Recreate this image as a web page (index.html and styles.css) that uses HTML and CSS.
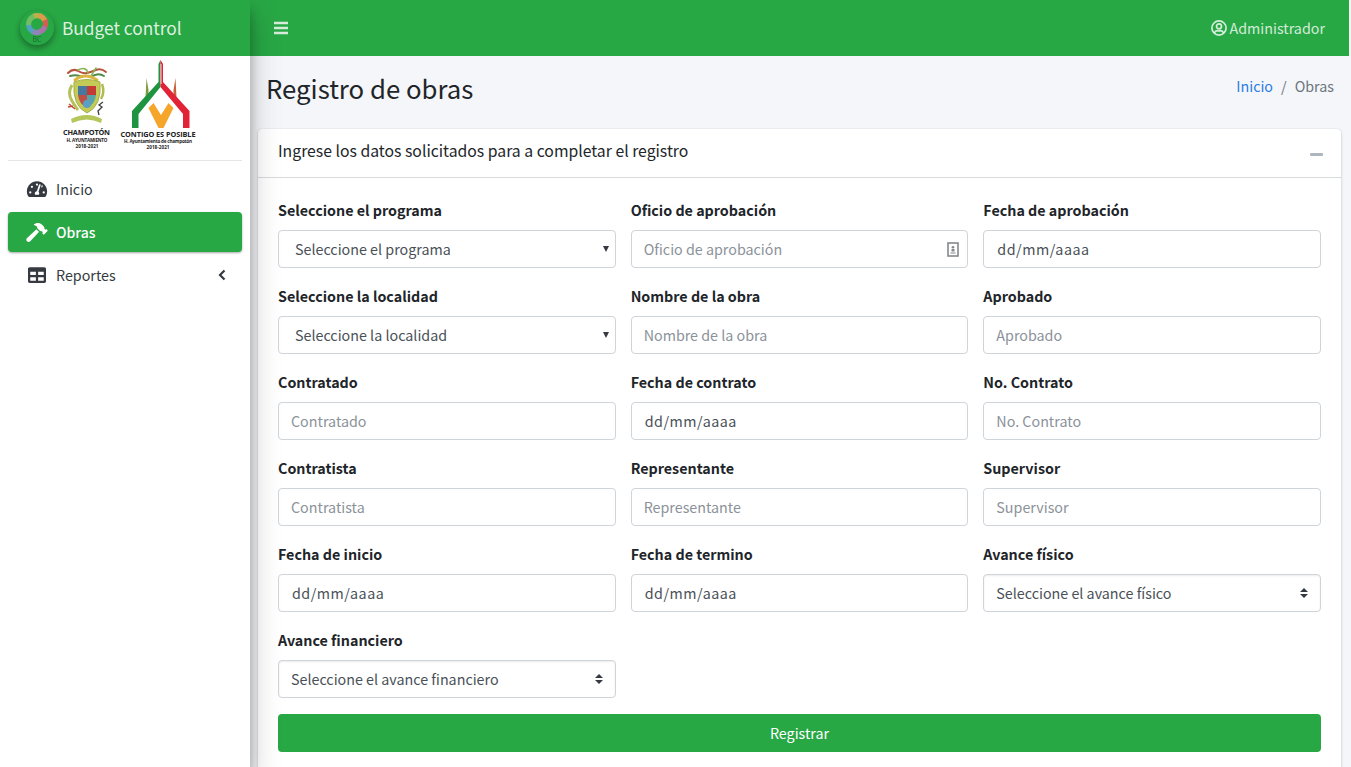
FILE: index.html
```html
<!DOCTYPE html>
<html lang="es">
<head>
<meta charset="utf-8">
<title>Budget control</title>
<link rel="stylesheet" href="styles.css">
</head>
<body>
<div class="app">
  <aside class="sidebar">
    <div class="brand">
      <svg class="brand-logo" width="34" height="34" viewBox="0 0 34 34">
        <circle cx="17" cy="17" r="17" fill="#28a745"/>
        <g fill="none" stroke-width="5.2">
          <path d="M13 5.600A9 9 0 0 1 20 5" stroke="#b9b04a"/>
          <path d="M19 4.600A9 9 0 0 1 25 10" stroke="#dc9a4c"/>
          <path d="M25 9A9 9 0 0 1 24.500 16.500" stroke="#d0604f"/>
          <path d="M25 15.500A9 9 0 0 1 19 21" stroke="#a874a8"/>
          <path d="M20 21A9 9 0 0 1 12 20" stroke="#8d85b8"/>
          <path d="M13 20.500A9 9 0 0 1 8.500 13" stroke="#4fa3bd"/>
          <path d="M8.500 14A9 9 0 0 1 14 5.400" stroke="#6fbf62"/>
        </g>
        <text class="logo-initials" x="17" y="30.500" text-anchor="middle">BC</text>
      </svg>
      <span class="brand-name">Budget control</span>
    </div>
    <div class="emblems">
      <svg width="250" height="104" viewBox="0 56 250 104">
        <g fill="none" stroke-linecap="round">
          <path d="M68 73q5-5 10-2t9 2 9-3 10 2" stroke="#b5533c" stroke-width="2"/>
          <path d="M70 76q7-2 12 1M91 77q7-5 13-1" stroke="#4f8a4a" stroke-width="2"/>
          <path d="M78 70q8-4 10 3M96 68l-5 8" stroke="#86b252" stroke-width="1.500"/>
          <path d="M75 80q10-8 22 0" stroke="#d9b740" stroke-width="3"/>
        </g>
        <path d="M74 82q13-5 26 0 2 24-13 31-15-7-13-31z" fill="#c3ca55" stroke="#a3b04a"/>
        <path d="M78 86h9v9h-9z" fill="#4678a0"/><path d="M87 86h9v9h-9z" fill="#c43a35"/>
        <path d="M78 95h9v13q-8-4-9-13z" fill="#bd5148"/><path d="M87 95h9q-1 9-9 13z" fill="#58a4a8"/>
        <circle cx="87" cy="104" r="4" fill="#5b9ec6"/>
        <path d="M72 85q-5 8 0 16t6 9" fill="none" stroke="#b4c25a" stroke-width="3"/>
        <path d="M69 104l6 5M68 107l5-1" stroke="#c5493c" stroke-width="1.500"/>
        <path d="M102 84q3 8-1 15" fill="none" stroke="#b0bb50" stroke-width="2.500"/>
        <path d="M103 102l-4 3 3 2-4 4 1 4" fill="none" stroke="#3c4043" stroke-width="1.300"/>
        <path d="M71 119q16-8 31 0l-1 4q-14-7-29 0z" fill="#b5c65a"/>
        <path d="M145.500 98l1-20 2 12v5z" fill="#7d9a3c"/><path d="M176.500 98l-1-20-2 12v5z" fill="#c8603a"/>
        <path d="M148.500 108l5-5 7.500 12 7.500-12 5 5-10 20h-5z" fill="#f6a52b"/>
        <path d="M160.500 60v27L138.500 114v14h-6.500v-17l26.500-29V64z" fill="#1f9440"/>
        <path d="M160.500 60l2.500 4v18l26.500 29v17H183v-14L160.500 87z" fill="#e02336"/>
        <path d="M161 64v20" stroke="#f3d9d2" stroke-width="1"/>
        <g class="emblem-text" text-anchor="middle">
          <text class="emblem-title" x="86.500" y="135" textLength="47">CHAMPOTÓN</text>
          <text x="87" y="142" textLength="41">H. AYUNTAMIENTO</text>
          <text x="87" y="148.300" textLength="23">2018-2021</text>
          <text class="emblem-title" x="158" y="136.500" textLength="75">CONTIGO ES POSIBLE</text>
          <text x="158" y="142.500" textLength="68">H. Ayuntamiento de champotón</text>
          <text x="158" y="148.800" textLength="23">2018-2021</text>
        </g>
      </svg>
    </div>
    <nav class="menu">
      <a class="item">
        <svg class="item-icon" width="21" height="18" viewBox="0 0 576 512"><path fill="currentColor" fill-rule="evenodd" d="M288 32C129 32 0 161 0 320c0 53 14 102 39 145 6 9 16 15 27 15h444c11 0 21-6 27-15 25-43 39-92 39-145 0-159-129-288-288-288zm0 64c16 0 29 11 32 26l-9 27c-5 7-13 11-23 11a32 32 0 0 1 0-64zM96 384a32 32 0 1 1 0-64 32 32 0 0 1 0 64zm48-160a32 32 0 1 1 0-64 32 32 0 0 1 0 64zm247-72l-61 184c13 12 22 28 22 48 0 12-3 23-9 32H233c-6-9-9-20-9-32 0-34 27-62 60-64l61-183c10-31 56-16 46 15zm15 57l22-64a32 32 0 1 1-22 64zm74 175a32 32 0 1 1 0-64 32 32 0 0 1 0 64z"/></svg>
        <span>Inicio</span>
      </a>
      <a class="item active">
        <svg class="item-icon" width="22" height="19" viewBox="0 0 576 512"><path fill="currentColor" d="M571.310 193.940l-22.630-22.630c-6.250-6.250-16.380-6.250-22.630 0l-11.310 11.310-28.900-28.900c5.630-21.310.36-44.900-16.350-61.610l-45.250-45.250c-62.480-62.480-163.790-62.480-226.280 0l90.510 45.250v18.750c0 16.970 6.740 33.250 18.750 45.250l49.140 49.140c16.710 16.710 40.300 21.980 61.610 16.350l28.900 28.900-11.310 11.310c-6.250 6.250-6.250 16.380 0 22.630l22.630 22.630c6.250 6.250 16.380 6.250 22.630 0l90.510-90.510c6.230-6.240 6.230-16.370-.02-22.620zm-286.720-15.200c-3.700-3.700-6.840-7.790-9.850-11.950L19.640 404.960c-25.570 23.880-26.260 64.190-1.530 88.930s65.050 24.050 88.920-1.530l238.130-255.070c-3.960-2.910-7.900-5.870-11.440-9.410l-49.130-49.140z"/></svg>
        <span>Obras</span>
      </a>
      <a class="item">
        <svg class="item-icon" width="20" height="18" viewBox="0 0 512 512"><path fill="currentColor" d="M464 32H48C22 32 0 54 0 80v352c0 27 22 48 48 48h416c27 0 48-21 48-48V80c0-26-21-48-48-48zM224 416H64v-96h160zm0-160H64v-96h160zm224 160H288v-96h160zm0-160H288v-96h160z"/></svg>
        <span>Reportes</span>
        <svg class="chevron" width="8" height="12" viewBox="0 0 8 12"><path d="M6.500 1.500L2 6l4.500 4.500" fill="none" stroke="currentColor" stroke-width="2.200"/></svg>
      </a>
    </nav>
  </aside>
  <div class="main">
    <header class="topbar">
      <svg width="14" height="16" viewBox="0 0 14 16"><path d="M0 3h14M0 8h14M0 13h14" stroke="currentColor" stroke-width="2.300"/></svg>
      <div class="user">
        <svg width="16" height="16" viewBox="0 0 16 16" fill="none" stroke="currentColor" stroke-width="1.700"><circle cx="8" cy="8" r="7.100"/><circle cx="8" cy="6.300" r="2.500"/><path d="M3.300 13q1-2.400 3-2.400 1.700.6 3.400 0 2 0 3 2.400"/></svg>
        <span>Administrador</span>
      </div>
    </header>
    <div class="page-head">
      <h1>Registro de obras</h1>
      <div class="crumbs"><a>Inicio</a><span class="slash">/</span><span>Obras</span></div>
    </div>
    <section class="card">
      <div class="card-head"><h3>Ingrese los datos solicitados para a completar el registro</h3><i class="minus"></i></div>
      <form class="card-body">
        <div class="grid">
          <div class="field"><label>Seleccione el programa</label><div class="control native">Seleccione el programa<i class="drop"></i></div></div>
          <div class="field"><label>Oficio de aprobación</label><div class="control hint">Oficio de aprobación
            <svg class="autofill" width="12" height="15" viewBox="0 0 12 15"><rect x="1" y="1" width="10" height="13" fill="#fff" stroke="#85888b" stroke-width="1.600"/><circle cx="6" cy="5.300" r="1.300" fill="#85888b"/><path d="M4.500 7h3v2.500h-3zM3.500 10.500h5v1h-5z" fill="#85888b"/></svg></div></div>
          <div class="field"><label>Fecha de aprobación</label><div class="control date">dd/mm/aaaa</div></div>
          <div class="field"><label>Seleccione la localidad</label><div class="control native">Seleccione la localidad<i class="drop"></i></div></div>
          <div class="field"><label>Nombre de la obra</label><div class="control hint">Nombre de la obra</div></div>
          <div class="field"><label>Aprobado</label><div class="control hint">Aprobado</div></div>
          <div class="field"><label>Contratado</label><div class="control hint">Contratado</div></div>
          <div class="field"><label>Fecha de contrato</label><div class="control date">dd/mm/aaaa</div></div>
          <div class="field"><label>No. Contrato</label><div class="control hint">No. Contrato</div></div>
          <div class="field"><label>Contratista</label><div class="control hint">Contratista</div></div>
          <div class="field"><label>Representante</label><div class="control hint">Representante</div></div>
          <div class="field"><label>Supervisor</label><div class="control hint">Supervisor</div></div>
          <div class="field"><label>Fecha de inicio</label><div class="control date">dd/mm/aaaa</div></div>
          <div class="field"><label>Fecha de termino</label><div class="control date">dd/mm/aaaa</div></div>
          <div class="field"><label>Avance físico</label><div class="control custom">Seleccione el avance físico<svg width="8" height="10" viewBox="0 0 8 10"><path d="M4 0l4 4H0zM4 10L0 6h8z" fill="#343a40"/></svg></div></div>
          <div class="field"><label>Avance financiero</label><div class="control custom">Seleccione el avance financiero<svg width="8" height="10" viewBox="0 0 8 10"><path d="M4 0l4 4H0zM4 10L0 6h8z" fill="#343a40"/></svg></div></div>
        </div>
        <button class="submit" type="button">Registrar</button>
      </form>
    </section>
  </div>
</div>
</body>
</html>
```
FILE: styles.css
```css
* { box-sizing: border-box; }
body {
  margin: 0;
  background: #f4f6f9;
  color: #212529;
  font-family: "Noto Sans CJK SC", "Noto Sans", sans-serif;
  font-size: 14.300px;
  line-height: 24px;
}
h1, h3 { margin: 0; font-weight: 400; }
.app { display: flex; height: 767px; overflow: hidden; }

.sidebar {
  position: relative;
  z-index: 2;
  width: 250px;
  flex: none;
  background: #fff;
  box-shadow: 0 14px 28px rgba(0,0,0,.25), 0 10px 10px rgba(0,0,0,.22);
}
.brand {
  display: flex;
  align-items: center;
  gap: 8px;
  height: 56px;
  padding-left: 20px;
  background: #28a745;
  color: rgba(255,255,255,.85);
  font-size: 17.300px;
}
.brand-logo {
  border-radius: 50%;
  box-shadow: 0 3px 6px rgba(0,0,0,.16), 0 3px 6px rgba(0,0,0,.23);
}
.logo-initials { font-size: 7px; fill: #1d6b31; }
.emblems { height: 105px; margin: 0 8px; border-bottom: 1px solid #e4e6e8; }
.emblems svg { display: block; margin-left: -8px; }
.emblem-text { font: 700 4.600px "Open Sans", sans-serif; fill: #222; }
.emblem-title { font-size: 7.300px; }

.menu { display: flex; flex-direction: column; gap: 3px; padding: 8px; }
.item {
  display: flex;
  align-items: center;
  height: 40px;
  padding: 0 16px 0 18px;
  border-radius: 4px;
  color: #343a40;
}
.item-icon { width: 22px; margin-right: 8px; }
.item.active {
  background: #28a745;
  color: #fff;
  font-size: 14px;
  font-weight: 500;
  box-shadow: 0 1px 3px rgba(0,0,0,.12), 0 1px 2px rgba(0,0,0,.24);
}
.chevron { margin-left: auto; }

.main { flex: 1; min-width: 0; }
.topbar {
  display: flex;
  align-items: center;
  justify-content: space-between;
  height: 56px;
  margin-right: 2px;
  padding: 0 24px;
  background: #28a745;
  color: rgba(255,255,255,.8);
}
.user { display: flex; align-items: center; gap: 3px; }
.page-head {
  display: flex;
  justify-content: space-between;
  height: 73px;
  padding: 14px 17px 0 16px;
}
.page-head h1 { font-size: 25.750px; line-height: 36px; }
.crumbs { display: flex; gap: 8px; padding-top: 4px; color: #6c757d; }
.crumbs a { color: #2a7de1; }

.card {
  height: 660px;
  margin: 0 10px 0 8px;
  border-radius: 4px;
  background: #fff;
  box-shadow: 0 0 1px rgba(0,0,0,.125), 0 1px 3px rgba(0,0,0,.2);
}
.card-head {
  display: flex;
  align-items: center;
  justify-content: space-between;
  height: 49px;
  padding: 0 18px 4px 20px;
  border-bottom: 1px solid #d9dadb;
}
.card-head h3 { font-size: 15.780px; }
.minus { width: 13px; height: 3px; margin-top: 6px; border-radius: 1px; background: #adb5bd; }
.card-body { padding: 20px; }
.grid { display: grid; grid-template-columns: repeat(3, 1fr); gap: 16px 15px; }
.field label { display: block; height: 24px; margin-bottom: 8px; font-weight: 700; }
.control {
  display: flex;
  align-items: center;
  justify-content: space-between;
  height: 38px;
  padding: 0 12px;
  border: 1px solid #ced4da;
  border-radius: 4px;
  color: #495057;
}
.hint { color: #8b9299; }
.date { padding-left: 13px; letter-spacing: .5px; }
.native { padding: 0 6px 0 16px; }
.drop {
  border: 3.500px solid transparent;
  border-top: 6px solid #343a40;
  border-bottom: 0;
}
.autofill { margin-right: -4px; }
.custom { box-shadow: inset 0 1px 2px rgba(0,0,0,.075); }
.submit {
  display: block;
  width: 100%;
  height: 38px;
  margin-top: 16px;
  border: 0;
  border-radius: 4px;
  background: #28a745;
  color: #fff;
  font: inherit;
}
```
